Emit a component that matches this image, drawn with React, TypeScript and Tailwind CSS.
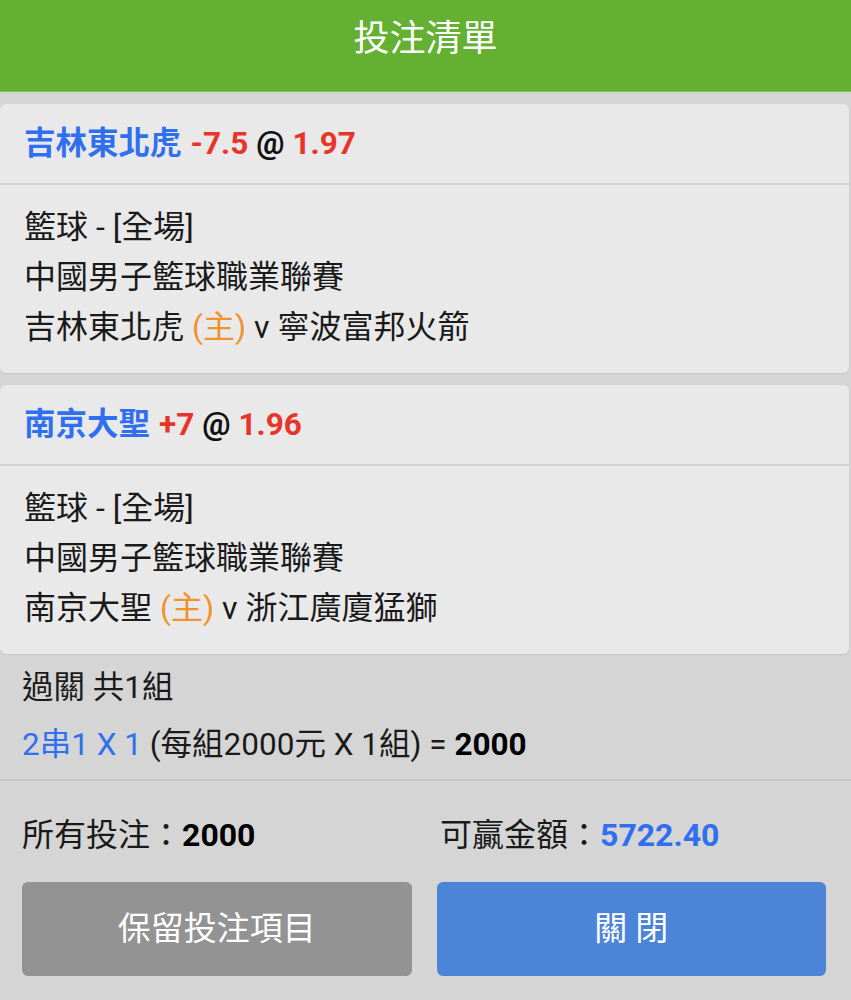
import React from "react";

const font = { fontFamily: 'Roboto, "Noto Sans CJK TC", "Noto Sans", sans-serif' };

function Card({ team, hc, odds, home, away }: { team: string; hc: string; odds: string; home: string; away: string }) {
  return (
    <div className="bg-[#e9e9e9] rounded-md shadow-[0_1px_1px_rgba(0,0,0,0.08)]">
      <div className="h-[81px] flex items-center pl-[24px] text-[31.5px] font-bold border-b-2 border-[#d3d3d3]">
        <span className="text-[#2f6ff0]">{team}</span>
        <span className="text-[#e8352b] ml-[9px]">{hc}</span>
        <span className="text-[#111] ml-[8px]">@</span>
        <span className="text-[#e8352b] ml-[8px]">{odds}</span>
      </div>
      <div className="pl-[24px] pt-[17px] pb-[21px] text-[32px] leading-[50px] text-[#1a1a1a]">
        <div>籃球 - [全場]</div>
        <div>中國男子籃球職業聯賽</div>
        <div>
          {home} <span className="text-[#f0922e]">(主)</span> v {away}
        </div>
      </div>
    </div>
  );
}

export default function App() {
  return (
    <div className="w-[851px] h-[1000px] bg-[#d5d5d5] overflow-hidden" style={font}>
      <div className="h-[92px] bg-[#63b033] border-b border-[#7cc04f] flex items-center justify-center pb-[14px]">
        <span className="text-white text-[36px]">投注清單</span>
      </div>
      <div className="pt-[12px] pr-[2px] flex flex-col gap-[12px]">
        <Card team="吉林東北虎" hc="-7.5" odds="1.97" home="吉林東北虎" away="寧波富邦火箭" />
        <Card team="南京大聖" hc="+7" odds="1.96" home="南京大聖" away="浙江廣廈猛獅" />
      </div>
      <div className="pl-[22px] pt-[5px] pb-[6px] text-[31.5px] text-[#1a1a1a] border-b-2 border-[#cacaca]">
        <div className="leading-[57px]">過關 共1組</div>
        <div className="leading-[57px]">
          <span className="text-[#2f6ff0]">2串1 X 1</span> (每組2000元 X 1組) = <span className="font-bold text-black">2000</span>
        </div>
      </div>
      <div className="px-[22px] pt-[31px] grid grid-cols-2 gap-x-[25px] text-[32px] text-[#1a1a1a]">
        <div className="h-[45px] flex items-center">
          所有投注：<span className="font-bold text-black">2000</span>
        </div>
        <div className="h-[45px] flex items-center pl-[2px]">
          可贏金額：<span className="font-bold text-[#2f6ff0]">5722.40</span>
        </div>
      </div>
      <div className="pl-[22px] pr-[25px] pt-[25px] grid grid-cols-2 gap-x-[25px]">
        <div className="h-[94px] rounded-[6px] bg-[#939393] text-white text-[33px] flex items-center justify-center">保留投注項目</div>
        <div className="h-[94px] rounded-[6px] bg-[#4c84d7] text-white text-[33px] flex items-center justify-center">關 閉</div>
      </div>
    </div>
  );
}
